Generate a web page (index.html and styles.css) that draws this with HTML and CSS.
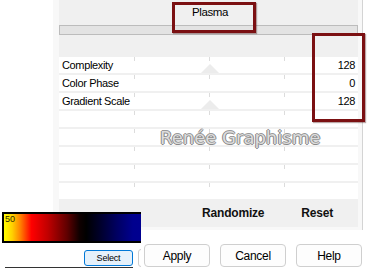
FILE: index.html
```html
<!DOCTYPE html>
<html lang="fr">
<head>
    <meta charset="UTF-8">
    <title>Plasma</title>
    <link rel="stylesheet" href="styles.css">
</head>
<body>

    <div class="panel">
        <div class="panel-head">
            <span class="title">Plasma</span>
        </div>
        <div class="track"></div>

        <div class="rows">
            <div class="row"><span>Complexity</span><span>128</span><i class="thumb"></i></div>
            <div class="row"><span>Color Phase</span><span>0</span></div>
            <div class="row"><span>Gradient Scale</span><span>128</span><i class="thumb"></i></div>
            <div class="row"></div>
            <div class="row"></div>
            <div class="row"></div>
            <div class="row"></div>
            <div class="row"></div>
        </div>

        <div class="panel-foot">
            <span>Randomize</span>
            <span>Reset</span>
        </div>
    </div>

    <div class="actions">
        <button class="btn">Apply</button>
        <button class="btn">Cancel</button>
        <button class="btn">Help</button>
    </div>

    <!-- marques rouges par-dessus -->
    <div class="mark mark-title"></div>
    <div class="mark mark-values"></div>

    <div class="watermark">Renée Graphisme</div>

    <!-- fenêtre du dégradé -->
    <div class="gradient-win">
        <div class="gradient"><span>50</span></div>
        <div class="gradient-bottom">
            <button class="select-btn">Select</button>
        </div>
        <span class="stub"></span>
    </div>

</body>
</html>
```

FILE: styles.css
```css
body {
    margin: 0;
    width: 369px;
    height: 269px;
    overflow: hidden;
    position: relative;
    background-color: #fff;
    font-family: "Liberation Sans", Arial, sans-serif;
    font-size: 11px;
    color: #000;
}
.panel {
    margin-left: 53px;
    width: 299px;
    background-color: #f0f0f0;
    border-left: 6px solid #f8f8f8;
    border-right: 4px solid #f8f8f8;
    border-bottom: 3px solid #f8f8f8;
    box-shadow: 1px 0 0 #d4d4d4;
}
.panel-head {
    height: 25px;
    padding-left: 133px;
    box-sizing: border-box;
}
.title {
    display: inline-block;
    margin-top: 6px;
    font-size: 11.5px;
    letter-spacing: -0.4px;
}
.track {
    height: 10px;
    box-sizing: border-box;
    background-color: #e3e3e3;
    border: 1px solid #bcbcbc;
}
.rows {
    margin-top: 22px;
    display: flex;
    flex-direction: column;
    gap: 2px;
}
.row {
    position: relative;
    height: 16px;
    display: flex;
    justify-content: space-between;
    align-items: center;
    padding: 0 3px;
    letter-spacing: -0.35px;
    background:
        linear-gradient(#dcdcdc, #dcdcdc) 75px 0 / 1px 4px no-repeat,
        linear-gradient(#dcdcdc, #dcdcdc) 150px 0 / 1px 4px no-repeat,
        linear-gradient(#dcdcdc, #dcdcdc) 225px 0 / 1px 4px no-repeat,
        #fff;
}
.row span {
    position: relative;
    z-index: 1;
}
.thumb {
    position: absolute;
    left: 142px;
    bottom: 0;
    width: 0;
    height: 0;
    border-left: 9px solid transparent;
    border-right: 9px solid transparent;
    border-bottom: 9px solid #ececec;
}
.panel-foot {
    height: 28px;
    display: flex;
    justify-content: flex-end;
    align-items: center;
    gap: 37px;
    padding-right: 25px;
    font-weight: bold;
    font-size: 12px;
    letter-spacing: -0.2px;
    color: #111;
}
.actions {
    display: flex;
    gap: 10px;
    padding-left: 144px;
    margin-top: 14px;
}
.btn {
    width: 66px;
    height: 23px;
    padding: 0;
    background-color: #fdfdfd;
    border: 1px solid #cfcfcf;
    border-radius: 4px;
    font-family: "Liberation Sans", Arial, sans-serif;
    font-size: 12px;
    letter-spacing: -0.3px;
    color: #000;
}
.mark {
    position: absolute;
    border: 3px solid #7b1012;
    box-shadow: 1px 1px 1px rgba(60,0,0,0.35);
}
.mark-title {
    left: 172px;
    top: 2px;
    width: 78px;
    height: 25px;
}
.mark-values {
    left: 312px;
    top: 33px;
    width: 47px;
    height: 83px;
}
.watermark {
    position: absolute;
    left: 160px;
    top: 128px;
    font-family: "DejaVu Sans", Verdana, sans-serif;
    font-size: 18px;
    line-height: 20px;
    letter-spacing: 0;
    color: #dcdcdc;
    text-shadow:
        1px 0 0 #8a8a8a, -1px 0 0 #8a8a8a,
        0 1px 0 #8a8a8a, 0 -1px 0 #9a9a9a,
        1px 1px 1px #fff;
}
.gradient-win {
    position: absolute;
    left: 0;
    top: 212px;
    width: 141px;
    height: 57px;
    overflow: hidden;
    background-color: #fff;
}
.gradient {
    height: 31px;
    box-sizing: border-box;
    border: 2px solid #000;
    border-right: none;
    margin-left: 2px;
    background: linear-gradient(to right,
        #ffff00 0%, #ffd000 6%, #ff8000 12%, #ff0000 20%,
        #c00000 32%, #600000 46%, #100000 55%, #000000 60%,
        #00002a 70%, #000060 82%, #00008e 94%, #000090 100%);
}
.gradient span {
    display: block;
    margin: 1px 0 0 1px;
    font-size: 9px;
    line-height: 9px;
    color: #2a2a00;
}
.gradient-bottom {
    position: relative;
    height: 24px;
    border-bottom: 1px solid #333;
    margin-left: 5px;
    width: 128px;
}
.select-btn {
    position: absolute;
    left: 79px;
    top: 7px;
    width: 49px;
    height: 16px;
    padding: 0;
    background-color: #e5f1fb;
    border: 1px solid #0078d7;
    border-radius: 3px;
    font-family: "Liberation Sans", Arial, sans-serif;
    font-size: 9px;
    letter-spacing: -0.2px;
    color: #000;
}
.stub {
    position: absolute;
    left: 138px;
    top: 37px;
    width: 8px;
    height: 16px;
    border: 1px solid #cfcfcf;
    border-radius: 3px;
}
```
